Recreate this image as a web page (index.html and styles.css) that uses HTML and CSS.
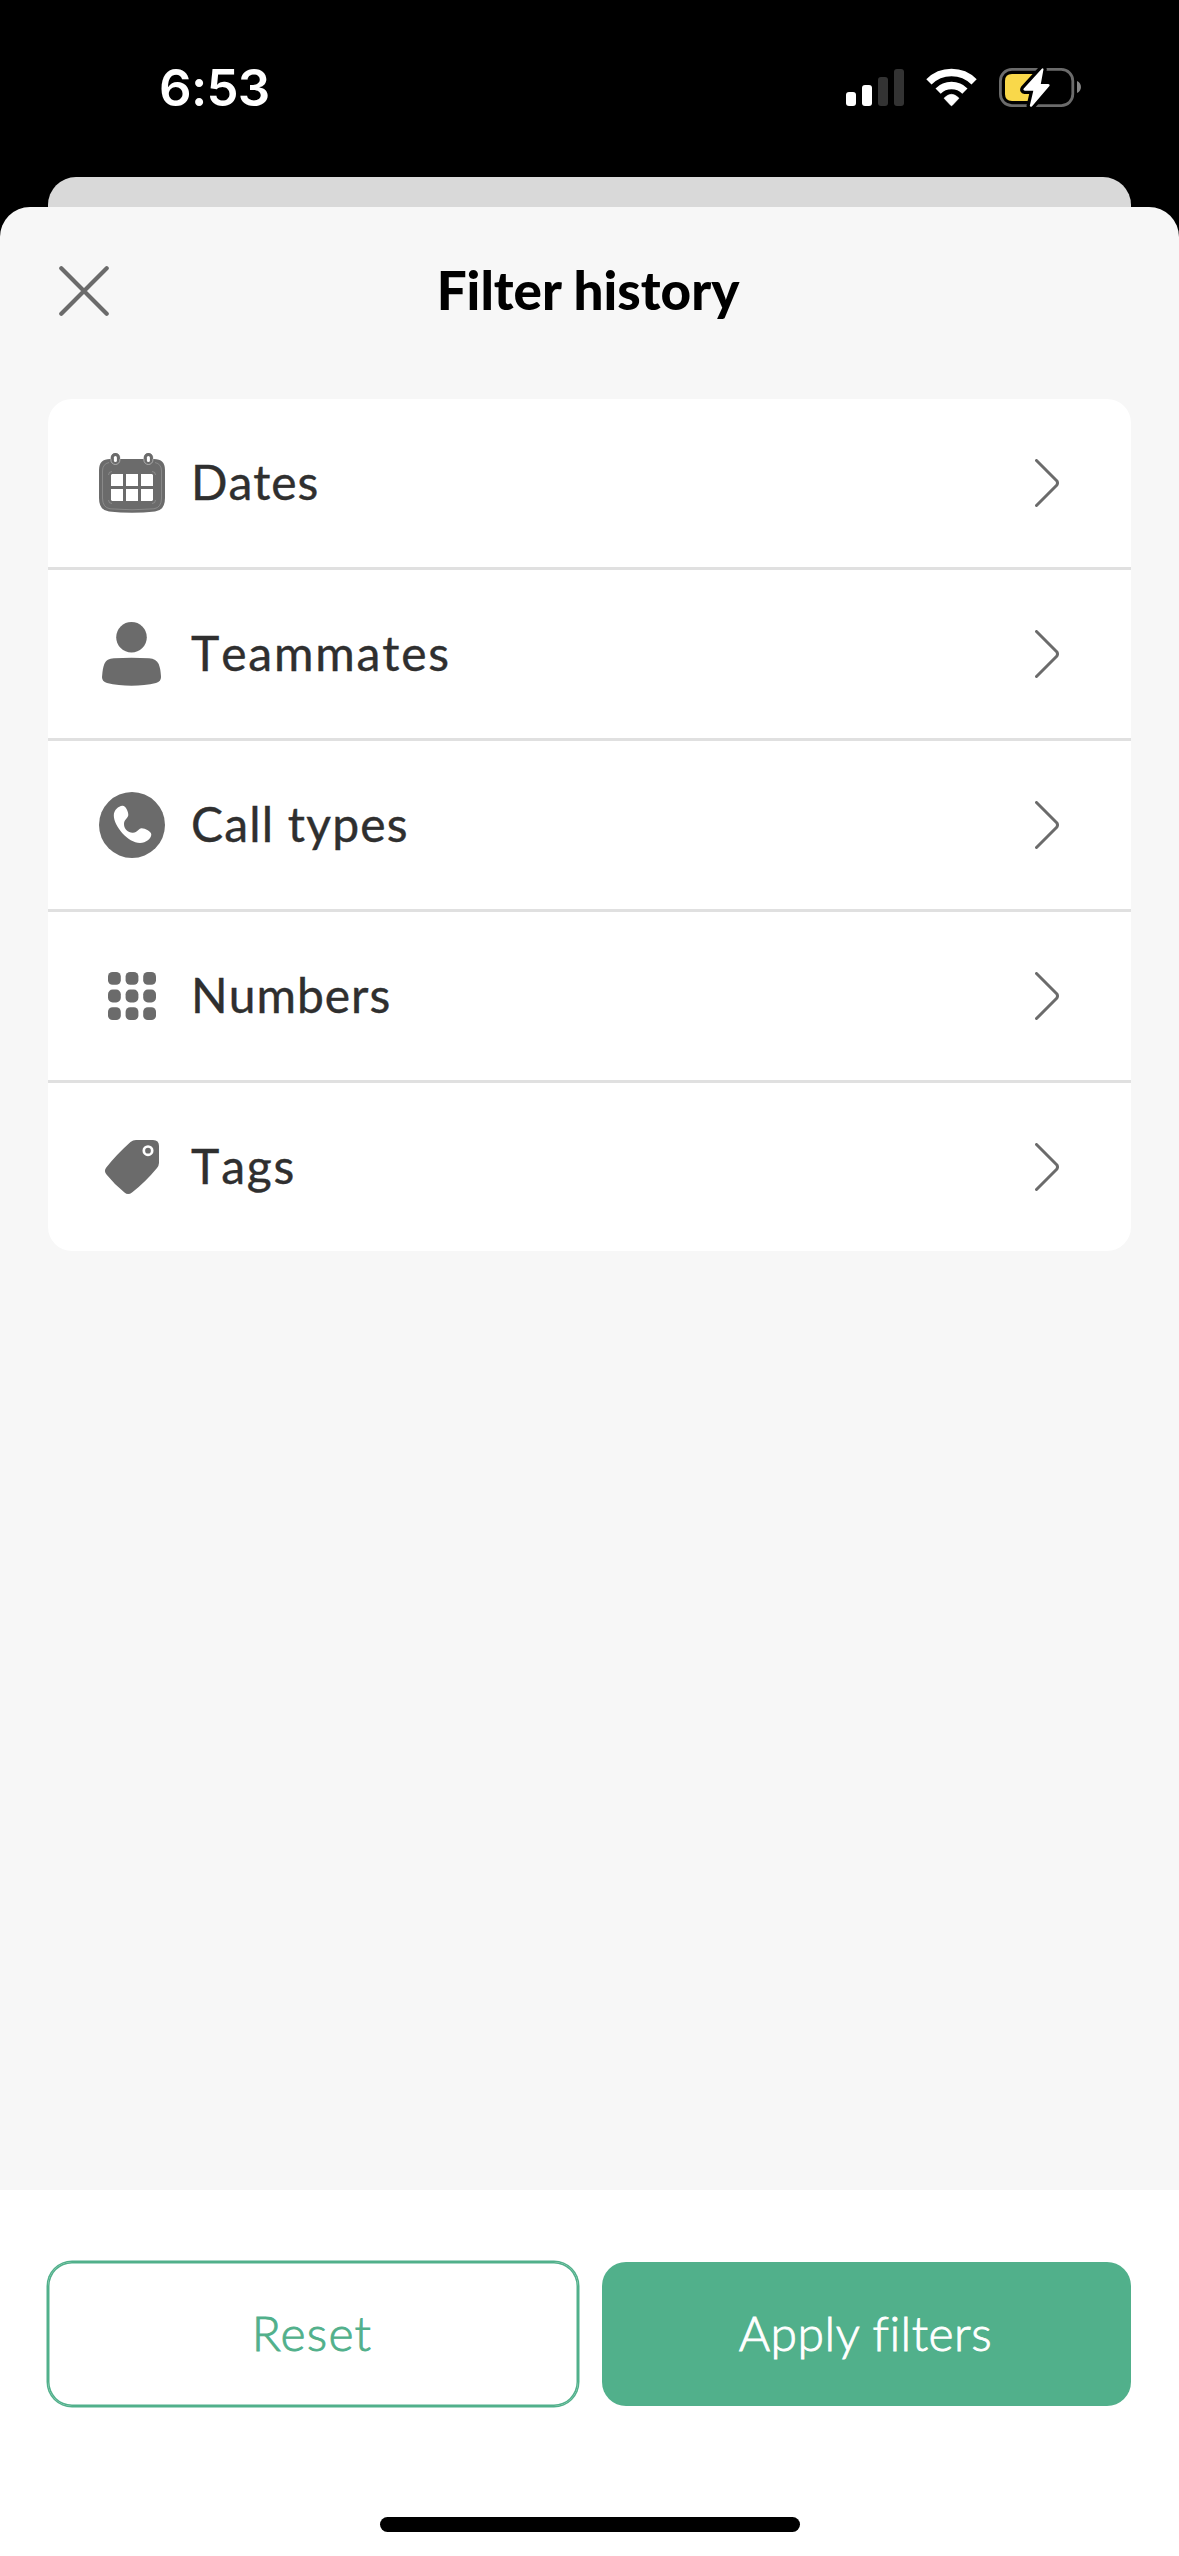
FILE: index.html
```html
<!DOCTYPE html>
<html lang="en">
<head>
<meta charset="utf-8">
<title>Filter history</title>
<link rel="stylesheet" href="styles.css">
</head>
<body>
<div class="screen">
  <header class="status">
    <span class="time">6:53</span>
    <svg class="indicators" viewBox="846 64 236 46" aria-hidden="true">
      <g fill="#fff">
        <rect x="846" y="92" width="10" height="14" rx="3"/>
        <rect x="862" y="85" width="10" height="21" rx="3"/>
      </g>
      <g fill="#333">
        <rect x="878" y="77" width="10" height="29" rx="3"/>
        <rect x="894" y="69" width="10" height="37" rx="3"/>
      </g>
      <g fill="none" stroke="#fff" stroke-width="7.4">
        <path d="M928.9 81.9A32 32 0 0 1 974.1 81.9"/>
        <path d="M938.1 91.1A19 19 0 0 1 964.9 91.1"/>
      </g>
      <path d="M944 98.2Q951.5 90.4 959 98.2L952.4 105.2Q951.5 106.2 950.6 105.2Z" fill="#fff" stroke="#fff" stroke-width=".6"/>
      <rect x="1000.4" y="69.4" width="72.4" height="36.2" rx="11.5" fill="none" stroke="#6b6b6b" stroke-width="2.8"/>
      <path d="M1077 81C1082.300 83 1082.300 91 1077 93Z" fill="#868686"/>
      <path d="M1012 74H1033V101H1012Q1005 101 1005 94V81Q1005 74 1012 74Z" fill="#f9d84a"/>
      <path d="M1041.800 68.800L1023.800 88.600Q1022.600 90.400 1024.800 90.700H1033.300L1029.800 105.800Q1030.500 107.800 1032.300 106L1049.200 86.300Q1050.500 84.300 1048 84H1040.800L1043.500 69.300Q1043 67.400 1041.800 68.800Z" fill="#fff" stroke="#000" stroke-width="6.500" paint-order="stroke"/>
    </svg>
  </header>

  <div class="stack"></div>

  <main class="sheet">
    <div class="sheet-header">
      <svg class="close" viewBox="0 0 50 50" role="img" aria-label="Close"><path d="M2.300 2.300L47.700 47.700M47.700 2.300L2.300 47.700"/></svg>
      <h1 class="title">Filter history</h1>
    </div>

    <ul class="filters">
      <li class="row">
        <svg class="icon" viewBox="0 0 66 66" aria-hidden="true">
          <path d="M11 9H55Q66 9 66 20V48Q66 60.500 56 61.500Q33 64 10 61.500Q0 60.500 0 48V20Q0 9 11 9Z"/>
          <g fill="none" stroke="#979797" stroke-width=".7">
            <path d="M10 12.500Q3.500 14 3.500 21V48Q3.500 57.500 11 58.800Q33 60.800 55 58.800Q62.500 57.500 62.500 48V21Q62.500 14 56 12.500"/>
            <path d="M9.500 25Q9.500 21.500 13 21.500M53 21.500Q56.500 21.500 56.500 25M9.500 50Q9.500 53.500 13 53.500M53 53.500Q56.500 53.500 56.500 50"/>
          </g>
          <g fill="#6b6b6b" stroke="#bdbdbd" stroke-width=".8">
            <rect x="11.900" y="3.500" width="9" height="11" rx="4.500"/>
            <rect x="44.900" y="3.500" width="9" height="11" rx="4.500"/>
          </g>
          <g fill="#6b6b6b">
            <path d="M11.900 9V7.500a4.500 4.500 0 0 1 9 0V9ZM44.900 9V7.500a4.500 4.500 0 0 1 9 0V9Z"/>
          </g>
          <g fill="#fff">
            <rect x="14.900" y="6" width="3" height="6" rx="1.500"/>
            <rect x="47.900" y="6" width="3" height="6" rx="1.500"/>
            <path d="M13 24H24V36H12V25ZM27 24H39V36H27ZM42 24H53L54 25V36H42ZM12 39H24V51H13L12 50ZM27 39H39V51H27ZM42 39H54V50L53 51H42Z"/>
          </g>
        </svg>
        <span class="label label-dates">Dates</span>
        <svg class="chevron" viewBox="0 0 24 48" aria-hidden="true"><path d="M1.500 1.500L21.700 21.700Q23.300 24 21.700 26.300L1.500 46.500"/></svg>
      </li>
      <li class="row">
        <svg class="icon" viewBox="0 0 66 66" aria-hidden="true">
          <circle cx="32.500" cy="16.300" r="15.300"/>
          <path d="M3 56C3.500 50 4 46.500 5.300 43C7 39 10 37.600 15 37.200C27 36.500 38 36.500 50 37.200C55 37.600 58 39.500 59.700 43C61 46.500 61.700 50 62 56C62 59 60.500 61 57 62C42 65.600 23 65.600 8 62C4.500 61 3 59 3 56Z"/>
        </svg>
        <span class="label label-teammates">Teammates</span>
        <svg class="chevron" viewBox="0 0 24 48" aria-hidden="true"><path d="M1.500 1.500L21.700 21.700Q23.300 24 21.700 26.300L1.500 46.500"/></svg>
      </li>
      <li class="row">
        <svg class="icon" viewBox="0 0 66 66" aria-hidden="true">
          <circle cx="33" cy="33" r="33"/>
          <path fill="#fff" d="M23.300 13.700C26.500 13.200 29.500 19.500 29.300 23C29.200 26 25 27.500 25 32C25 37.500 29.500 41 34 40.700C38.500 40.700 39.500 36.500 42.500 36.300C46 36.200 52.300 39.500 52.300 42.500C52.300 46.500 47 51 41 51C29 51 14.800 34 14.800 23.500C14.800 18 19.500 14 23.300 13.700Z"/>
        </svg>
        <span class="label label-calls">Call types</span>
        <svg class="chevron" viewBox="0 0 24 48" aria-hidden="true"><path d="M1.500 1.500L21.700 21.700Q23.300 24 21.700 26.300L1.500 46.500"/></svg>
      </li>
      <li class="row">
        <svg class="icon" viewBox="0 0 66 66" aria-hidden="true">
          <rect x="9" y="9" width="12.800" height="12.800" rx="4.600"/><rect x="26.600" y="9" width="12.800" height="12.800" rx="4.600"/><rect x="44.200" y="9" width="12.800" height="12.800" rx="4.600"/>
          <rect x="9" y="26.600" width="12.800" height="12.800" rx="4.600"/><rect x="26.600" y="26.600" width="12.800" height="12.800" rx="4.600"/><rect x="44.200" y="26.600" width="12.800" height="12.800" rx="4.600"/>
          <rect x="9" y="44.200" width="12.800" height="12.800" rx="4.600"/><rect x="26.600" y="44.200" width="12.800" height="12.800" rx="4.600"/><rect x="44.200" y="44.200" width="12.800" height="12.800" rx="4.600"/>
        </svg>
        <span class="label label-numbers">Numbers</span>
        <svg class="chevron" viewBox="0 0 24 48" aria-hidden="true"><path d="M1.500 1.500L21.700 21.700Q23.300 24 21.700 26.300L1.500 46.500"/></svg>
      </li>
      <li class="row">
        <svg class="icon" viewBox="0 0 66 66" aria-hidden="true">
          <path d="M37 6H54Q60 6 60 12V29Q59.800 32 58 34Q46 48.500 33 58.500Q29 61.500 25.500 58.500Q15 50 7.500 40.500Q4.500 37 7.300 33.500Q17 21 31.500 8Q34 6 37 6Z"/>
          <circle cx="49" cy="16.700" r="4.200" fill="none" stroke="#fff" stroke-width="2.700"/>
        </svg>
        <span class="label label-tags">Tags</span>
        <svg class="chevron" viewBox="0 0 24 48" aria-hidden="true"><path d="M1.500 1.500L21.700 21.700Q23.300 24 21.700 26.300L1.500 46.500"/></svg>
      </li>
    </ul>
  </main>

  <footer class="actions">
    <div class="buttons">
      <button class="button button-outline" type="button"><span>Reset</span></button>
      <button class="button button-solid" type="button"><span>Apply filters</span></button>
    </div>
    <div class="home-indicator"></div>
  </footer>
</div>
</body>
</html>
```
FILE: styles.css
```css
* { box-sizing: border-box; }

body { margin: 0; background: #000; }

.screen {
  width: 1179px;
  height: 2556px;
  display: flex;
  flex-direction: column;
  font-family: Lato, sans-serif;
}

.status {
  height: 177px;
  padding: 0 97px 3px 159px;
  display: flex;
  align-items: center;
  justify-content: space-between;
  background: #000;
}

.time {
  padding-top: 2px;
  font: 600 51px/60px Inter, sans-serif;
  letter-spacing: -0.7px;
  color: #fff;
}

.indicators { width: 236px; height: 46px; }

.stack {
  height: 90px;
  margin: 0 48px -60px;
  border-radius: 28px 28px 0 0;
  background: #d9d9d9;
}

.sheet {
  flex: 1;
  position: relative;
  padding: 0 48px;
  border-radius: 30px 30px 0 0;
  background: #f7f7f7;
}

.sheet-header {
  height: 168px;
  padding: 0 11px;
  display: grid;
  grid-template-columns: 50px 1fr 50px;
  align-items: center;
}

.close {
  width: 50px;
  height: 50px;
  fill: none;
  stroke: #6b6b6b;
  stroke-width: 4.2;
  stroke-linecap: round;
}

.title {
  margin: 0;
  padding: 0 3px 3px 0;
  text-align: center;
  font-size: 53px;
  font-weight: 900;
  line-height: 64px;
  color: #000;
}

.filters {
  margin: 24px 0 0;
  padding: 0;
  list-style: none;
  border-radius: 24px;
  background: #fff;
}

.row {
  height: 168px;
  padding: 0 72px 0 51px;
  display: flex;
  align-items: center;
}

.row + .row {
  height: 171px;
  border-top: 3px solid #e0e0e0;
}

.icon { width: 66px; height: 66px; margin-right: 26px; fill: #6b6b6b; }

.label {
  flex: 1;
  padding-bottom: 2px;
  font-size: 48px;
  font-kerning: none;
  line-height: 56px;
  color: #2f2f2f;
  -webkit-text-stroke: 0.4px #2f2f2f;
}

.label-dates { letter-spacing: 0.9px; }
.label-teammates { letter-spacing: 1.8px; }
.label-calls { letter-spacing: 1.2px; }
.label-numbers { letter-spacing: 1px; }
.label-tags { letter-spacing: 1.8px; }

.chevron {
  width: 24px;
  height: 48px;
  fill: none;
  stroke: #6b6b6b;
  stroke-width: 3;
  stroke-linecap: round;
  stroke-linejoin: round;
}

.actions {
  height: 366px;
  padding: 72px 48px 24px;
  display: flex;
  flex-direction: column;
  align-items: center;
  justify-content: space-between;
  background: #fff;
}

.buttons {
  width: 100%;
  display: grid;
  grid-template-columns: 530px 529px;
  gap: 24px;
}

.button {
  height: 144px;
  padding: 0 2px 2px 0;
  border: 0;
  border-radius: 24px;
  font: 300 48px/56px Lato, sans-serif;
  -webkit-text-stroke: 0.9px currentColor;
}

.button-outline {
  background: #fff;
  color: #51b08b;
  letter-spacing: 1.2px;
  box-shadow: 0 0 0 1.5px #51b08b, inset 0 0 0 1.5px #51b08b;
}

.button-solid {
  background: #51b08b;
  color: #fff;
  letter-spacing: 0.5px;
}

.home-indicator {
  width: 420px;
  height: 15px;
  border-radius: 8px;
  background: #000;
}
```
